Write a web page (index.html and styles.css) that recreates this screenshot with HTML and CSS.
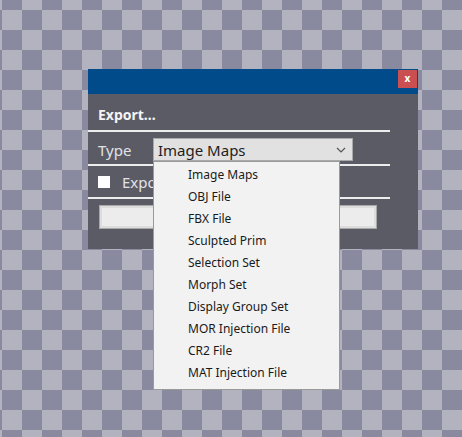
FILE: index.html
```html
<!DOCTYPE html>
<html>
<head>
<meta charset="utf-8">
<link rel="stylesheet" href="styles.css">
</head>
<body>
  <div class="dialog">
    <div class="titlebar">
      <button class="close">x</button>
    </div>
    <div class="content">
      <div class="heading">Export...</div>
      <div class="rule"></div>
      <div class="row type-row">
        <span class="label">Type</span>
        <div class="select-wrap">
          <div class="select">
            <span>Image Maps</span>
            <svg class="chev" width="10" height="6" viewBox="0 0 10 6"><path d="M1 1 L5 5 L9 1" fill="none" stroke="#555" stroke-width="1.2"/></svg>
          </div>
          <ul class="menu">
            <li>Image Maps</li>
            <li>OBJ File</li>
            <li>FBX File</li>
            <li>Sculpted Prim</li>
            <li>Selection Set</li>
            <li>Morph Set</li>
            <li>Display Group Set</li>
            <li>MOR Injection File</li>
            <li>CR2 File</li>
            <li>MAT Injection File</li>
          </ul>
        </div>
      </div>
      <div class="rule"></div>
      <div class="row check-row">
        <span class="box"></span>
        <span class="label">Export</span>
      </div>
      <div class="rule"></div>
      <div class="action"></div>
    </div>
  </div>
</body>
</html>
```

FILE: styles.css
```css
html, body {
  margin: 0;
  padding: 0;
}

body {
  width: 462px;
  height: 437px;
  overflow: hidden;
  font-family: "Noto Sans", "Open Sans", sans-serif;
  background-color: #b3b3bf;
  background-image:
    conic-gradient(#898aa0 0 25%, transparent 0 50%, #898aa0 0 75%, transparent 0);
  background-size: 40px 40px;
  background-position: -18px -10px;
}

.dialog {
  margin: 69px 0 0 88px;
  width: 330px;
  height: 180px;
  background: #5b5b66;
  display: flex;
  flex-direction: column;
}

.titlebar {
  height: 25px;
  background: #024b8a;
  display: flex;
  justify-content: flex-end;
  align-items: flex-start;
  padding: 1px 1px 0 0;
  box-sizing: border-box;
}

.close {
  width: 19px;
  height: 18px;
  border: 0;
  padding: 0 0 2px;
  background: #c94f50;
  color: #fff;
  font: bold 10px "Noto Sans", sans-serif;
  line-height: 16px;
}

.content {
  display: flex;
  flex-direction: column;
}

.heading {
  color: #f4f4f4;
  font-weight: bold;
  font-size: 14px;
  line-height: 20px;
  padding: 11px 0 0 10px;
  height: 25px;
}

.rule {
  width: 302px;
  height: 2px;
  background: #ededed;
}

.row {
  display: flex;
  align-items: center;
  padding-left: 10px;
}

.label {
  color: #e2e2e6;
  font-size: 15px;
}

.type-row {
  height: 23px;
  padding-top: 6px;
  padding-bottom: 3px;
}

.type-row .label {
  width: 55px;
}

.select-wrap {
  position: relative;
}

.select {
  width: 200px;
  height: 23px;
  box-sizing: border-box;
  background: #e1e1e1;
  border: 1px solid #a9a9a9;
  display: flex;
  align-items: center;
  justify-content: space-between;
  padding: 0 4px 0 4px;
  font-size: 15px;
  color: #1e1e1e;
}

.chev {
  margin-right: 2px;
}

.menu {
  position: absolute;
  top: 23px;
  left: 0;
  width: 187px;
  margin: 0;
  padding: 2px 0 5px;
  list-style: none;
  background: #f2f2f2;
  border: 1px solid #9a9a9a;
  box-sizing: border-box;
  z-index: 2;
}

.menu li {
  height: 22px;
  line-height: 22px;
  padding-left: 34px;
  font-size: 12px;
  color: #1a1a1a;
}

.check-row {
  height: 31px;
}

.box {
  width: 12px;
  height: 12px;
  background: #fff;
  margin-right: 12px;
}

.action {
  margin: 6px 0 0 11px;
  width: 278px;
  height: 24px;
  box-sizing: border-box;
  border: 1px solid #a9a9a9;
  background: #ececec;
  box-shadow: inset 0 0 0 2px #dddddd;
}
```
